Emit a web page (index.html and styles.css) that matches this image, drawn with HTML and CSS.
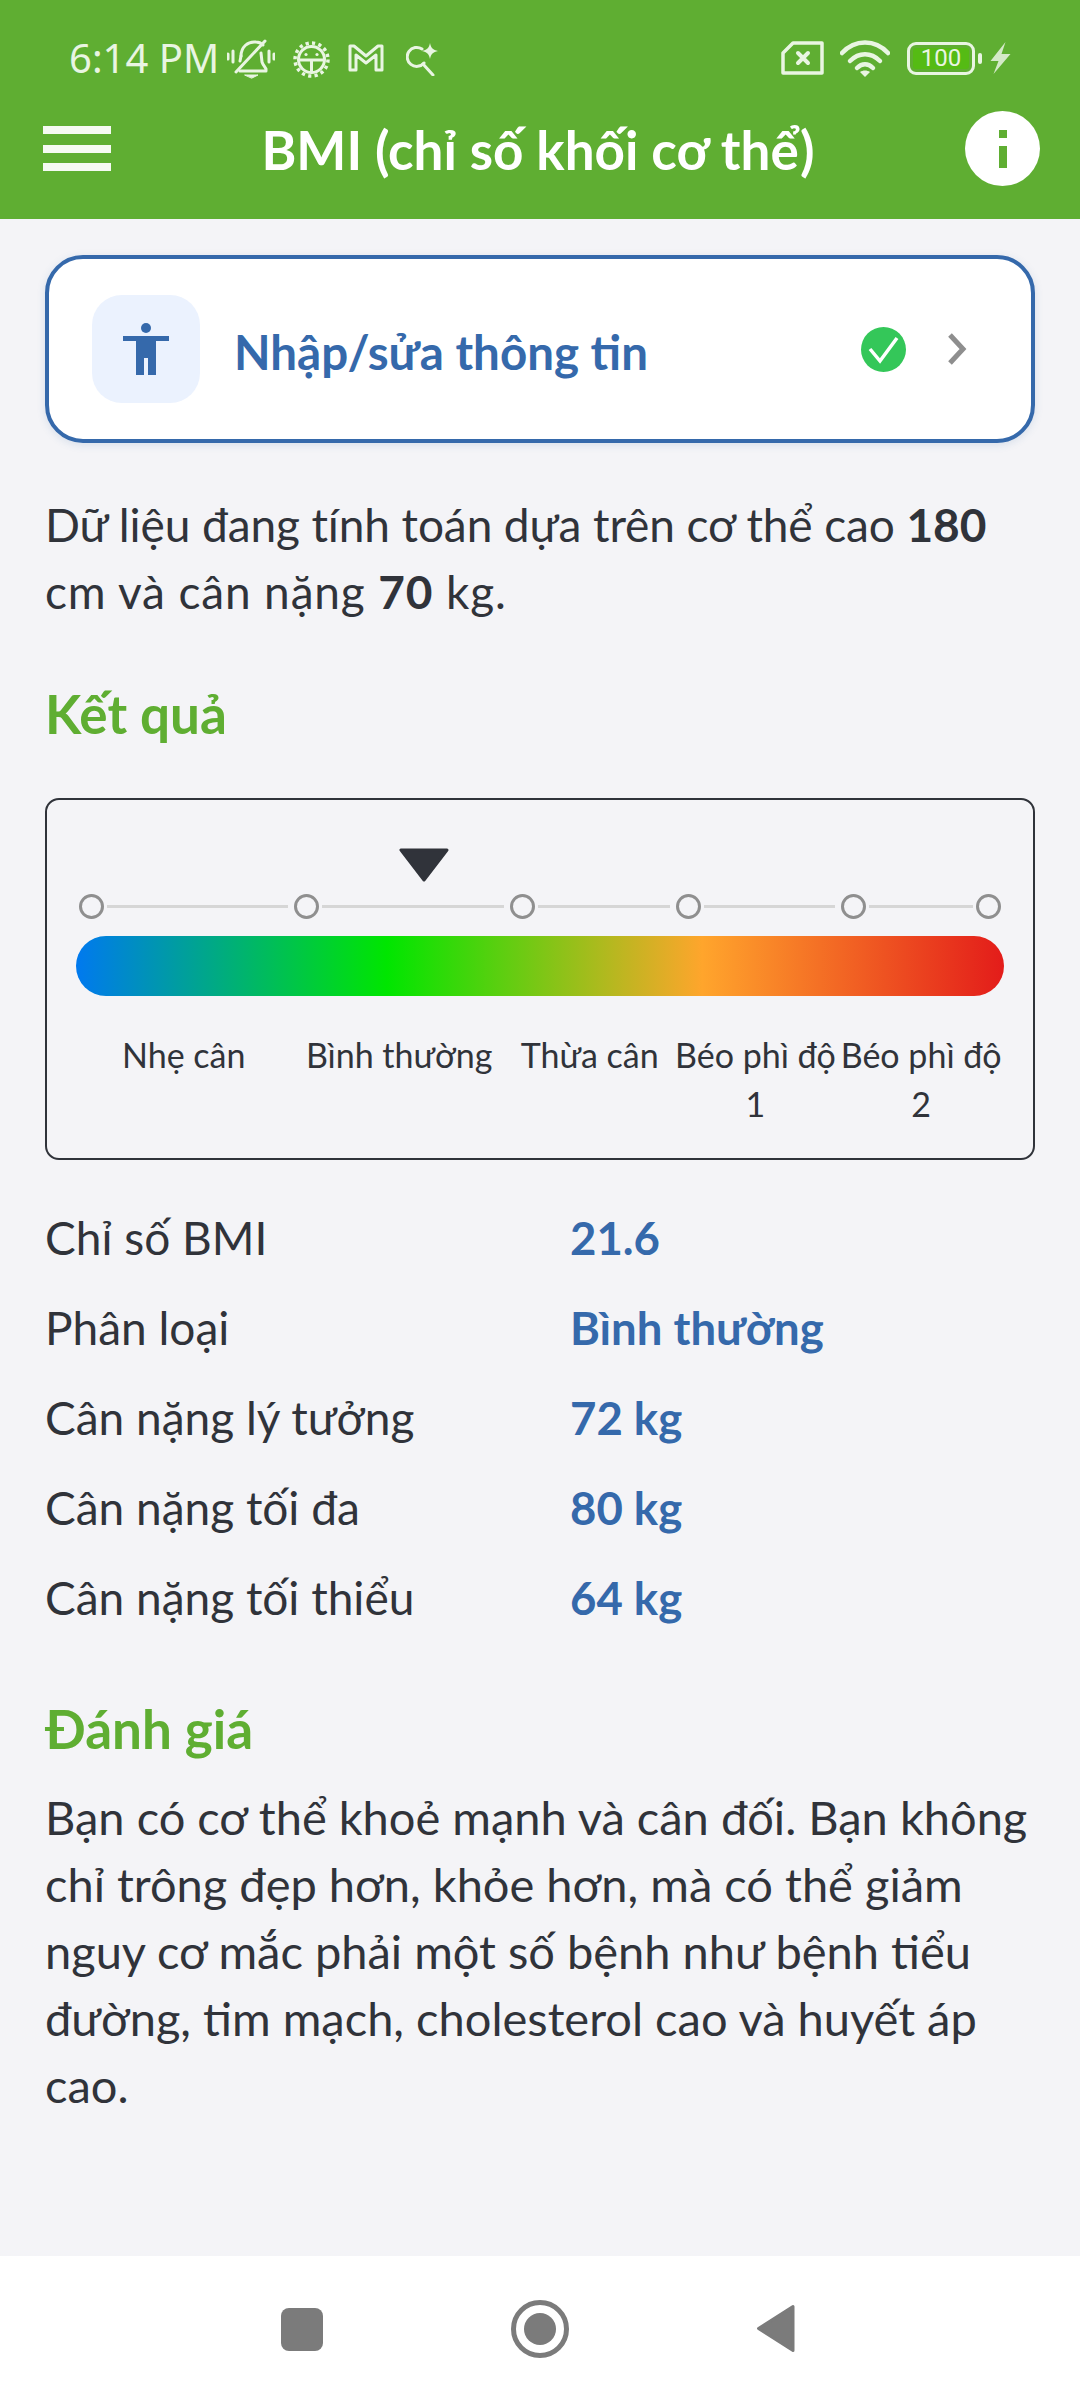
FILE: index.html
```html
<!DOCTYPE html>
<html lang="vi">
<head>
<meta charset="utf-8">
<title>BMI</title>
<link rel="stylesheet" href="styles.css">
</head>
<body>
<div class="app">
  <header class="header">
    <div class="status">
      <div class="status-left">
        <span class="time">6:14 PM</span>
        <svg class="si bell" viewBox="0 0 48 40" fill="none" stroke="#e9f5e2" stroke-width="3" stroke-linecap="round" stroke-linejoin="round"><path d="M14 17c0-9 7-15 15-14 3 0 5 1 7 3"/><path d="M14 17 13 22"/><path d="M34 14l1 9c1 3 3 5 4 7v2H13"/><path d="M9 33 38 2"/><path d="M1 15v5M6 12v11M42 12v11M47 15v5"/><path d="M18 36h13l-6 3z" fill="#e9f5e2" stroke-width="1"/></svg>
        <svg class="si gear" viewBox="0 0 37 37" fill="none" stroke="#e9f5e2" stroke-width="3"><circle cx="18.500" cy="18.500" r="13"/><circle cx="18.500" cy="18.500" r="16.500" stroke-width="3.500" stroke-dasharray="3.200 3.280"/><path d="M6 19h25M18.500 19v12" stroke-linecap="round"/><circle cx="13" cy="13.500" r="1.600" fill="#e9f5e2" stroke="none"/><circle cx="24" cy="13.500" r="1.600" fill="#e9f5e2" stroke="none"/></svg>
        <svg class="si gmail" viewBox="0 0 36 28" fill="none" stroke="#e9f5e2" stroke-width="3" stroke-linejoin="round"><path d="M2 2h4l12 10L30 2h4v24h-6V11l-10 8-10-8v15H2z"/></svg>
        <svg class="si search" viewBox="0 0 33 33" fill="none" stroke="#e9f5e2" stroke-width="3" stroke-linecap="round"><path d="M16 6a9.500 9.500 0 1 0 2 14"/><path d="m17 21 10 11"/><path d="M24 0c1 5 3 7 8 8-5 1-7 3-8 8-1-5-3-7-8-8 5-1 7-3 8-8z" fill="#e9f5e2" stroke="none"/></svg>
      </div>
      <div class="status-right">
        <svg class="si sim" viewBox="0 0 43 34" fill="none" stroke="#e9f5e2" stroke-width="3.500" stroke-linejoin="round"><path d="M12 2h29v30H2V12z"/><path d="m17 12 10 10M27 12 17 22" stroke-linecap="round" stroke-width="4"/></svg>
        <svg class="si wifi" viewBox="0 0 50 37" fill="none" stroke="#e9f5e2" stroke-width="4.500" stroke-linecap="round"><path d="M2 13c13-14 33-14 46 0"/><path d="M10 21c9-9 21-9 30 0"/><path d="M17 28c5-5 11-5 16 0"/><path d="m25 37-5-5c3-2 7-2 10 0z" fill="#e9f5e2" stroke="none"/></svg>
        <span class="battery"><span class="battery-fill">100</span></span>
        <span class="battery-tip"></span>
        <svg class="si bolt" viewBox="0 0 20 32"><path d="M15 0 0 19h8L3 32l17-20h-9z" fill="#d4e9c8"/></svg>
      </div>
    </div>
    <div class="toolbar">
      <div class="menu"><span></span><span></span><span></span></div>
      <h1 class="title">BMI (chỉ số khối cơ thể)</h1>
      <svg class="info" viewBox="0 0 75 75"><circle cx="37.500" cy="37.500" r="37.500" fill="#fff"/><path d="M34 19h8v8h-8zM34 35h8v22h-8z" fill="#5fae32"/></svg>
    </div>
  </header>

  <main class="main">
    <a class="card">
      <span class="card-icon">
        <svg viewBox="0 0 46 52" width="46" height="52"><circle cx="23" cy="5" r="5" fill="#3569ab"/><path d="M0 13h46v5H33v34h-8V35h-4v17h-8V18H0z" fill="#3569ab"/></svg>
      </span>
      <span class="card-text">Nhập/sửa thông tin</span>
      <svg class="check" viewBox="0 0 45 45"><circle cx="22.500" cy="22.500" r="22.500" fill="#34c759"/><path d="m9 22 10 12 17-23" fill="none" stroke="#fff" stroke-width="3.500"/></svg>
      <svg class="chev" viewBox="0 0 20 32"><path d="m3 2 13 14L3 30" fill="none" stroke="#8e8e8e" stroke-width="5"/></svg>
    </a>

    <p class="text intro">Dữ liệu đang tính toán dựa trên cơ thể cao <b>180</b><br><span class="intro-end">cm và cân nặng <b>70</b> kg.</span></p>

    <h2 class="heading result-h">Kết quả</h2>

    <section class="scale">
      <svg class="pointer" viewBox="0 0 52 34"><path d="M3 2h46L26 32z" fill="#30333a" stroke="#30333a" stroke-width="3" stroke-linejoin="round"/></svg>
      <div class="ticks">
        <div class="tick"><i class="dot"></i><i class="line"></i></div>
        <div class="tick"><i class="dot"></i><i class="line"></i></div>
        <div class="tick"><i class="dot"></i><i class="line"></i></div>
        <div class="tick"><i class="dot"></i><i class="line"></i></div>
        <div class="tick last"><i class="dot"></i><i class="line"></i><i class="dot"></i></div>
      </div>
      <div class="bar"></div>
      <div class="labels">
        <span>Nhẹ cân</span>
        <span>Bình thường</span>
        <span>Thừa cân</span>
        <span>Béo phì độ 1</span>
        <span>Béo phì độ 2</span>
      </div>
    </section>

    <dl class="stats">
      <div class="stat"><dt>Chỉ số BMI</dt><dd>21.6</dd></div>
      <div class="stat"><dt>Phân loại</dt><dd>Bình thường</dd></div>
      <div class="stat"><dt>Cân nặng lý tưởng</dt><dd>72 kg</dd></div>
      <div class="stat"><dt>Cân nặng tối đa</dt><dd>80 kg</dd></div>
      <div class="stat"><dt>Cân nặng tối thiểu</dt><dd>64 kg</dd></div>
    </dl>

    <h2 class="heading eval-h">Đánh giá</h2>
    <p class="text eval-text">Bạn có cơ thể khoẻ mạnh và cân đối. Bạn không<br>chỉ trông đẹp hơn, khỏe hơn, mà có thể giảm<br>nguy cơ mắc phải một số bệnh như bệnh tiểu<br>đường, tim mạch, cholesterol cao và huyết áp<br>cao.</p>
  </main>

  <nav class="nav">
    <svg class="nav-square" viewBox="0 0 42 43"><rect width="42" height="43" rx="8" fill="#7b7b7b"/></svg>
    <svg class="nav-home" viewBox="0 0 58 58"><circle cx="29" cy="29" r="26.500" fill="none" stroke="#7b7b7b" stroke-width="5"/><circle cx="29" cy="29" r="16" fill="#7b7b7b"/></svg>
    <svg class="nav-back" viewBox="0 0 40 49"><path d="M37 2.500v44L2.500 24.500z" fill="#7b7b7b" stroke="#7b7b7b" stroke-width="3" stroke-linejoin="round"/></svg>
  </nav>
</div>
</body>
</html>
```

FILE: styles.css
```css
* { box-sizing: border-box; }
html, body { margin: 0; padding: 0; }
body { font-family: "Lato", "Noto Sans", sans-serif; color: #30333a; background: #f4f4f7; }
.app { width: 1080px; height: 2400px; display: flex; flex-direction: column; overflow: hidden; }

.header { height: 219px; background: #5fae32; flex: none; }
.status { height: 78px; padding: 0 69px 0 69px; display: flex; justify-content: space-between; align-items: flex-end; }
.status-left, .status-right { display: flex; align-items: center; }
.time { font-family: "Noto Sans", sans-serif; font-size: 40px; line-height: 40px; color: #e9f5e2; }
.si { display: block; flex: none; }
.bell { width: 48px; height: 40px; margin: 0 0 -2px 8px; }
.gear { width: 37px; height: 37px; margin: 0 0 -2px 18px; }
.gmail { width: 36px; height: 28px; margin: 0 0 0 18px; }
.search { width: 33px; height: 33px; margin: 0 0 -2px 22px; }
.status-right { height: 40px; }
.sim { width: 43px; height: 34px; }
.wifi { width: 50px; height: 37px; margin-left: 16px; }
.battery { width: 68px; height: 33px; margin-left: 17px; border: 3px solid #e9f5e2; border-radius: 9px; padding: 3px; display: flex; }
.battery-fill { flex: 1; background: #55bb14; border-radius: 3px; color: #e9f5e2; font: 24px/21px "Roboto", sans-serif; text-align: center; }
.battery-tip { width: 4px; height: 11px; margin-left: 3px; background: #e9f5e2; border-radius: 2px; }
.bolt { width: 21px; height: 32px; margin-left: 8px; }

.toolbar { height: 141px; padding: 0 40px 0 43px; display: flex; align-items: center; justify-content: space-between; }
.menu { width: 68px; height: 45px; display: flex; flex-direction: column; justify-content: space-between; }
.menu span { height: 8px; background: #f5faf2; }
.title { margin: 2px 0 0; color: #fff; font-size: 53px; line-height: 64px; font-weight: 700; text-align: center; }
.info { width: 75px; height: 75px; }

.main { flex: 1; padding: 36px 45px 0; display: flex; flex-direction: column; }
.card { height: 188px; border: 4px solid #3569ab; border-radius: 38px; background: #fff; padding: 0 64px 0 43px; display: flex; align-items: center; box-shadow: 0 2px 8px rgba(53,105,171,.15); }
.card-icon { width: 108px; height: 108px; border-radius: 30px; background: #ebf2fe; display: flex; align-items: center; justify-content: center; flex: none; }
.card-text { margin: 4px 0 0 34px; flex: 1; color: #3569ab; font-size: 47.500px; font-weight: 700; }
.check { width: 45px; height: 45px; flex: none; }
.chev { width: 20px; height: 32px; margin-left: 41px; flex: none; }

.text { margin: 0; font-size: 46px; line-height: 67px; }
.text b { font-weight: 700; }
.intro { margin-top: 48px; letter-spacing: -0.1px; }
.intro-end { letter-spacing: 0.85px; }
.heading { margin: 0; color: #5fae32; font-size: 53px; line-height: 64px; font-weight: 700; }
.result-h { margin-top: 57px; }
.eval-h { margin-top: 55px; }
.eval-text { margin-top: 23px; font-size: 47px; }

.scale { position: relative; margin: 52px 0 0; height: 362px; border: 2px solid #30333a; border-radius: 14px; padding: 94px 29px 0; }
.pointer { position: absolute; left: 351px; top: 48px; width: 52px; height: 34px; }
.ticks, .labels { display: grid; grid-template-columns: 1.3fr 1.3fr 1fr 1fr 1fr; }
.ticks { height: 25px; }
.tick { display: flex; align-items: center; padding-left: 3px; }
.tick.last { padding-right: 3px; }
.dot { width: 25px; height: 25px; border: 3px solid #8f8f8f; border-radius: 50%; flex: none; }
.line { flex: 1; height: 3px; background: #d6d6d6; margin: 0 3px; }
.bar { height: 60px; margin-top: 17px; border-radius: 30px; background: linear-gradient(90deg, #0079ef 0%, #00e600 33.5%, #ffa52c 67.500%, #e31c1a 100%); }
.labels { margin-top: 34px; }
.labels span { font-size: 34px; line-height: 49px; text-align: center; }

.stats { margin: 32px 0 0; }
.stat { display: flex; height: 90px; align-items: center; }
.stat dt { width: 525px; font-size: 46px; }
.stat dd { margin: 0; color: #3569ab; font-size: 45.500px; font-weight: 700; }

.nav { height: 144px; padding-right: 3px; background: #fff; flex: none; display: flex; align-items: center; justify-content: center; }
.nav-square { width: 42px; height: 43px; margin-top: 2px; }
.nav-home { width: 58px; height: 58px; margin-left: 188px; margin-top: 2px; }
.nav-back { width: 40px; height: 49px; margin-left: 187px; }
```
